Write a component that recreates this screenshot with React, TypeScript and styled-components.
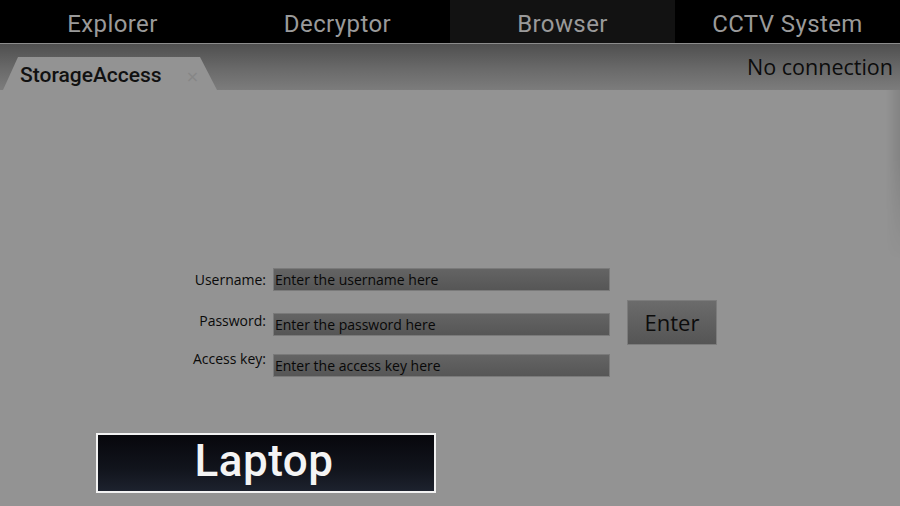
import React from "react";
import styled, { createGlobalStyle } from "styled-components";

const GlobalStyle = createGlobalStyle`
    html, body {
        margin: 0;
        padding: 0;
        background: #000;
        overflow: hidden;
    }
`;

//#region Style Definitions
const Screen = styled.div`
    width: 900px;
    height: 506px;
    display: flex;
    flex-direction: column;
    font-family: "Open Sans", "Noto Sans", sans-serif;
`;

const NavBar = styled.nav`
    height: 43px;
    display: grid;
    grid-template-columns: repeat(4, 1fr);
    background: #000;
    border-bottom: 1px solid #8c8c8c;
`;

const NavItem = styled.div<{ $active?: boolean }>`
    display: flex;
    align-items: center;
    justify-content: center;
    background: ${(p) => (p.$active ? "#121212" : "#000")};
    color: #9a9a9a;
    font-family: Roboto, "DejaVu Sans", sans-serif;
    font-weight: 400;
    font-size: 24px;
    letter-spacing: 0.4px;
    padding-top: 5px;
`;

const TabStrip = styled.div`
    height: 46px;
    display: flex;
    align-items: flex-end;
    justify-content: space-between;
    background: linear-gradient(180deg, #4f4f4f 0%, #6a6a6a 55%, #7c7c7c 100%);
`;

const Tab = styled.div`
    width: 214px;
    height: 33px;
    margin-left: 3px;
    box-sizing: border-box;
    padding: 2px 0 0 17px;
    display: flex;
    align-items: center;
    gap: 24px;
    background: #939393;
    clip-path: polygon(15px 0, 197px 0, 214px 100%, 0 100%);
`;

const TabTitle = styled.span`
    font-family: Roboto, "DejaVu Sans", sans-serif;
    font-weight: 500;
    font-size: 21px;
    color: #111;
`;

const TabClose = styled.span`
    font-family: "DejaVu Sans", sans-serif;
    font-size: 16px;
    color: #868686;
    margin-top: 4px;
`;

const Status = styled.div`
    align-self: flex-start;
    margin-top: 8px;
    padding-right: 7px;
    font-size: 21.5px;
    color: #0c0c0c;
`;

const Body = styled.main`
    position: relative;
    flex: 1;
    background: #939393;
    display: flex;
    flex-direction: column;

    &::after {
        content: "";
        position: absolute;
        top: 0;
        right: 0;
        width: 14px;
        height: 170px;
        background: linear-gradient(90deg, rgba(0, 0, 0, 0) 0%, rgba(0, 0, 0, 0.1) 100%);
        mask-image: linear-gradient(180deg, #000 40%, transparent 100%);
    }
`;

const LoginArea = styled.div`
    display: flex;
    align-items: center;
    gap: 17px;
    margin: 178px 0 0 180px;
`;

const Fields = styled.div`
    display: flex;
    flex-direction: column;
`;

const FieldRow = styled.div<{ $gap: number }>`
    display: flex;
    align-items: center;
    margin-top: ${(p) => p.$gap}px;
`;

const Label = styled.label<{ $lift: number }>`
    width: 86px;
    text-align: right;
    margin-right: 7px;
    font-size: 14px;
    font-weight: 500;
    color: #0a0a0a;
    transform: translateY(${(p) => -p.$lift}px);
`;

const TextInput = styled.input`
    width: 337px;
    height: 23px;
    box-sizing: border-box;
    padding: 0 1px;
    border: 1px solid #7a7a7a;
    background: linear-gradient(180deg, #646464 0%, #565656 100%);
    font-family: "Open Sans", "Noto Sans", sans-serif;
    font-size: 14px;
    font-weight: 500;
    color: #080808;
    outline: none;

    &::placeholder {
        color: #080808;
        opacity: 1;
    }
`;

const EnterButton = styled.button`
    width: 90px;
    height: 45px;
    border: 1px solid #7c7c7c;
    background: linear-gradient(180deg, #6b6b6b 0%, #555555 100%);
    font-family: "Open Sans", "Noto Sans", sans-serif;
    font-size: 22px;
    color: #0c0c0c;
    padding: 0 0 2px;
`;

const DeviceBadge = styled.div`
    width: 340px;
    height: 60px;
    box-sizing: border-box;
    margin: 56px 0 0 96px;
    border: 2px solid #f2f2f2;
    background: linear-gradient(180deg, #07070c 0%, #11141c 60%, #1d222e 100%);
    display: flex;
    align-items: center;
    justify-content: center;
    color: #f4f4f4;
    font-family: Roboto, "DejaVu Sans", sans-serif;
    font-weight: 500;
    font-size: 44px;
    letter-spacing: 0.5px;
    padding: 0 4px 4px 0;
`;
//#endregion

const navItems = ["Explorer", "Decryptor", "Browser", "CCTV System"];

const fields = [
    { label: "Username:", placeholder: "Enter the username here", gap: 0, lift: 0 },
    { label: "Password:", placeholder: "Enter the password here", gap: 22, lift: 4 },
    { label: "Access key:", placeholder: "Enter the access key here", gap: 18, lift: 7 },
];

function App() {
    return (
        <Screen>
            <GlobalStyle />
            <NavBar>
                {navItems.map((item) => (
                    <NavItem key={item} $active={item === "Browser"}>
                        {item}
                    </NavItem>
                ))}
            </NavBar>
            <TabStrip>
                <Tab>
                    <TabTitle>StorageAccess</TabTitle>
                    <TabClose>×</TabClose>
                </Tab>
                <Status>No connection</Status>
            </TabStrip>
            <Body>
                <LoginArea>
                    <Fields>
                        {fields.map((f) => (
                            <FieldRow key={f.label} $gap={f.gap}>
                                <Label $lift={f.lift}>{f.label}</Label>
                                <TextInput placeholder={f.placeholder} />
                            </FieldRow>
                        ))}
                    </Fields>
                    <EnterButton>Enter</EnterButton>
                </LoginArea>
                <DeviceBadge>Laptop</DeviceBadge>
            </Body>
        </Screen>
    );
}

export default App;
